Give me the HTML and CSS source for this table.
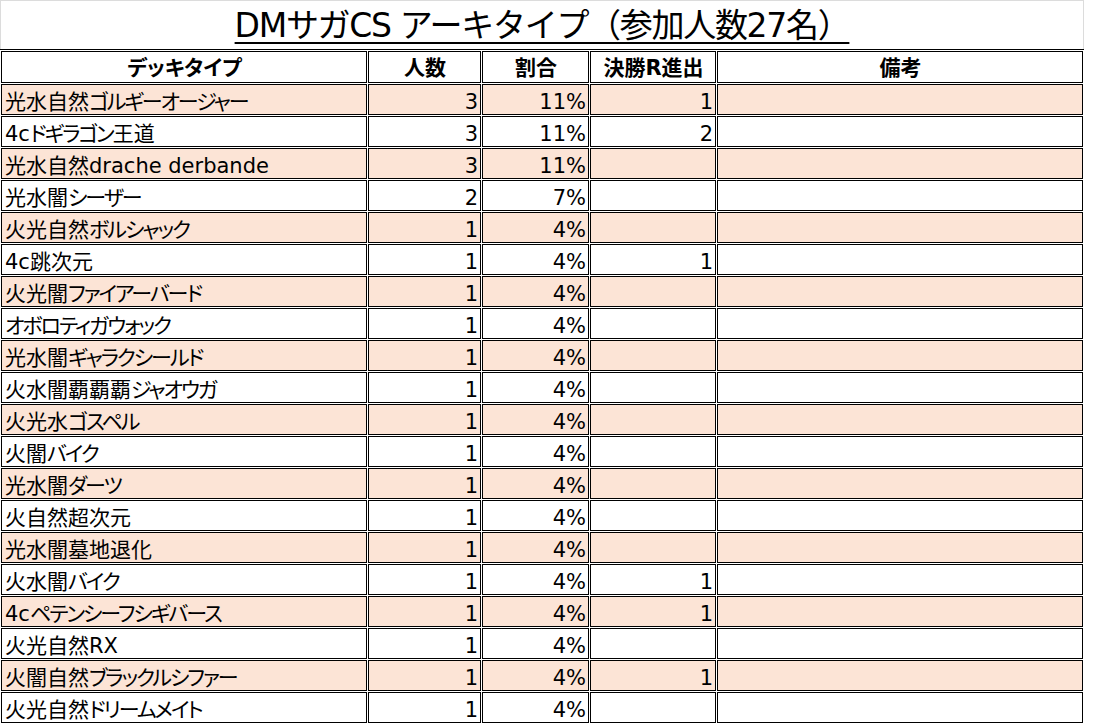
FILE: index.html
```html
<!DOCTYPE html>
<html lang="ja">
<head>
<meta charset="utf-8">
<title>DMサガCS アーキタイプ</title>
<link rel="stylesheet" href="styles.css">
</head>
<body>
<div class="sheet">
  <div class="title-box"><h1 class="title">DMサガCS アーキタイプ（参加人数27名）</h1></div>
  <table class="grid">
    <thead>
      <tr>
        <th class="c-deck">デッキタイプ</th>
        <th class="c-num">人数</th>
        <th class="c-rate">割合</th>
        <th class="c-final">決勝R進出</th>
        <th class="c-note">備考</th>
      </tr>
    </thead>
    <tbody>
      <tr class="hl"><td>光水自然<span class="k">ゴルギーオージャー</span></td><td class="n">3</td><td class="n">11%</td><td class="n">1</td><td></td></tr>
      <tr><td>4c<span class="k">ドギラゴン</span>王道</td><td class="n">3</td><td class="n">11%</td><td class="n">2</td><td></td></tr>
      <tr class="hl"><td>光水自然drache derbande</td><td class="n">3</td><td class="n">11%</td><td class="n"></td><td></td></tr>
      <tr><td>光水闇<span class="k">シーザー</span></td><td class="n">2</td><td class="n">7%</td><td class="n"></td><td></td></tr>
      <tr class="hl"><td>火光自然<span class="k">ボルシャック</span></td><td class="n">1</td><td class="n">4%</td><td class="n"></td><td></td></tr>
      <tr><td>4c跳次元</td><td class="n">1</td><td class="n">4%</td><td class="n">1</td><td></td></tr>
      <tr class="hl"><td>火光闇<span class="k">ファイアーバード</span></td><td class="n">1</td><td class="n">4%</td><td class="n"></td><td></td></tr>
      <tr><td><span class="k">オボロティガウォック</span></td><td class="n">1</td><td class="n">4%</td><td class="n"></td><td></td></tr>
      <tr class="hl"><td>光水闇<span class="k">ギャラクシールド</span></td><td class="n">1</td><td class="n">4%</td><td class="n"></td><td></td></tr>
      <tr><td>火水闇覇覇覇<span class="k">ジャオウガ</span></td><td class="n">1</td><td class="n">4%</td><td class="n"></td><td></td></tr>
      <tr class="hl"><td>火光水<span class="k">ゴスペル</span></td><td class="n">1</td><td class="n">4%</td><td class="n"></td><td></td></tr>
      <tr><td>火闇<span class="k">バイク</span></td><td class="n">1</td><td class="n">4%</td><td class="n"></td><td></td></tr>
      <tr class="hl"><td>光水闇<span class="k">ダーツ</span></td><td class="n">1</td><td class="n">4%</td><td class="n"></td><td></td></tr>
      <tr><td>火自然超次元</td><td class="n">1</td><td class="n">4%</td><td class="n"></td><td></td></tr>
      <tr class="hl"><td>光水闇墓地退化</td><td class="n">1</td><td class="n">4%</td><td class="n"></td><td></td></tr>
      <tr><td>火水闇<span class="k">バイク</span></td><td class="n">1</td><td class="n">4%</td><td class="n">1</td><td></td></tr>
      <tr class="hl"><td>4c<span class="k">ペテンシーフシギバース</span></td><td class="n">1</td><td class="n">4%</td><td class="n">1</td><td></td></tr>
      <tr><td>火光自然RX</td><td class="n">1</td><td class="n">4%</td><td class="n"></td><td></td></tr>
      <tr class="hl"><td>火闇自然<span class="k">ブラックルシファー</span></td><td class="n">1</td><td class="n">4%</td><td class="n">1</td><td></td></tr>
      <tr><td>火光自然<span class="k">ドリームメイト</span></td><td class="n">1</td><td class="n">4%</td><td class="n"></td><td></td></tr>
    </tbody>
  </table>
</div>
</body>
</html>
```
FILE: styles.css
```css
html, body {
  margin: 0;
  padding: 0;
  background: #ffffff;
}

body {
  font-family: "DejaVu Sans", "Noto Sans CJK JP", sans-serif;
  color: #000000;
}

.sheet {
  width: 1084px;
}

.title-box {
  box-sizing: border-box;
  height: 49px;
  border: 1px solid #dcdcdc;
  border-bottom: none;
  display: flex;
  justify-content: center;
}

.title {
  margin: 0;
  padding-top: 5px;
  font-size: 33px;
  font-weight: normal;
  line-height: 40px;
  letter-spacing: -1.3px;
  text-decoration: underline;
  text-decoration-thickness: 2px;
  text-underline-offset: 5px;
}

.grid {
  width: 1084px;
  table-layout: fixed;
  border-collapse: separate;
  border-spacing: 1px;
  border-top: 1px solid #000000;
  font-size: 21px;
  font-feature-settings: "palt";
}

.grid th,
.grid td {
  box-sizing: border-box;
  border: 1px solid #000000;
  white-space: nowrap;
  overflow: hidden;
}

.grid th {
  padding: 4px 2px 2px 3px;
  line-height: 24px;
  font-weight: bold;
  text-align: center;
}

.grid td {
  padding: 5px 2px 0 3px;
  line-height: 24px;
  text-align: left;
}

.grid td.n {
  text-align: right;
}

.grid .k {
  letter-spacing: -2px;
}

.c-deck { width: 366px; }
.c-num { width: 113px; }
.c-rate { width: 107px; }
.c-final { width: 126px; }
.c-note { width: 366px; }

.grid tr.hl td {
  background: #fce4d6;
}
```
